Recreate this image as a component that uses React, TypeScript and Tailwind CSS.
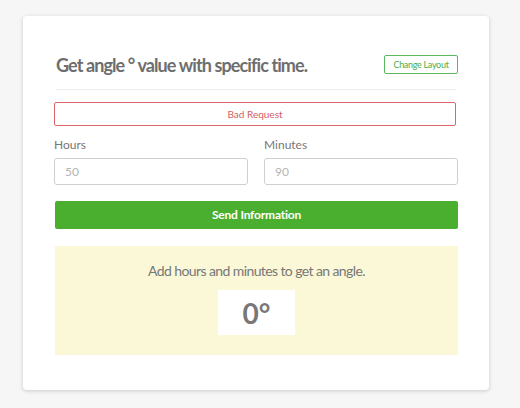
import React from "react";

export default function App() {
  return (
    <div className="w-[520px] h-[408px] bg-[#f6f6f6] pt-[16px] overflow-hidden" style={{ fontFamily: "Lato, 'Noto Sans', sans-serif" }}>
      <div className="ml-[23px] w-[466px] h-[374px] bg-white rounded-[4px] shadow-[0_1px_4px_rgba(0,0,0,0.18)] px-[31px] pt-[39px]">
        <div className="flex items-center justify-between h-[19px] pl-[2px] pr-0">
          <h1 className="text-[18px] font-bold text-[#6e6e6e] tracking-[-0.9px] leading-none">Get angle ° value with specific time.</h1>
          <button className="h-[19px] w-[74px] border border-[#5cb85c] rounded-[2px] text-[9px] text-[#4cae4c] leading-none tracking-[-0.3px]">Change Layout</button>
        </div>
        <div className="mt-[15px] mx-[2px] border-t border-[#ececec]" />
        <div className="mt-[12px] h-[24px] border border-[#d9686a] rounded-[2px] flex items-center justify-center text-[10px] text-[#d0605f] w-[402px]">Bad Request</div>
        <div className="mt-[11px] grid grid-cols-2 gap-[16px]">
          <div className="flex flex-col">
            <label className="text-[12px] leading-[16px] text-[#777]">Hours</label>
            <input className="mt-[5px] h-[27px] w-[194px] border border-[#cfcfcf] rounded-[3px] px-[10px] text-[12px] text-[#777] placeholder:text-[#b5b5b5] outline-none" placeholder="50" />
          </div>
          <div className="flex flex-col">
            <label className="text-[12px] leading-[16px] text-[#777]">Minutes</label>
            <input className="mt-[5px] h-[27px] w-[194px] border border-[#cfcfcf] rounded-[3px] px-[10px] text-[12px] text-[#777] placeholder:text-[#b5b5b5] outline-none" placeholder="90" />
          </div>
        </div>
        <button className="mt-[16px] ml-[1px] w-[403px] h-[28px] bg-[#4aaf2e] rounded-[2px] text-white text-[12px] font-bold tracking-[-0.2px]">Send Information</button>
        <div className="mt-[17px] ml-[1px] w-[403px] h-[109px] bg-[#fbf8d7] flex flex-col items-center pt-[15px]">
          <p className="text-[14px] leading-[20px] text-[#777] tracking-[-0.6px]">Add hours and minutes to get an angle.</p>
          <div className="mt-[9px] w-[77px] h-[45px] bg-white flex items-center justify-center text-[28px] font-bold text-[#777] leading-none">0°</div>
        </div>
      </div>
    </div>
  );
}
